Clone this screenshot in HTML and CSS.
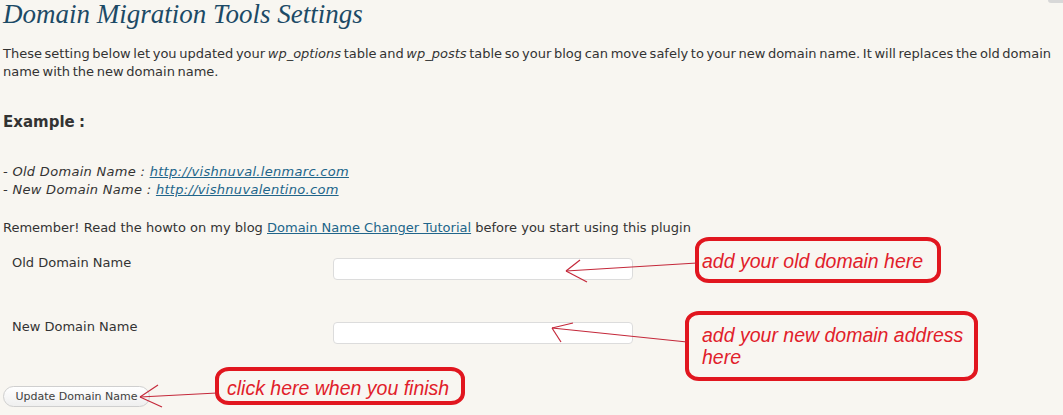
FILE: index.html
```html
<!DOCTYPE html>
<html>
<head>
<meta charset="utf-8">
<link rel="stylesheet" href="styles.css">
</head>
<body>
<div class="tab-corner"></div>
<div class="wrap">
  <h2 class="title">Domain Migration Tools Settings</h2>
  <p class="intro">These setting below let you updated your <em>wp_options</em> table and <em>wp_posts</em> table so your blog can move safely to your new domain name. It will replaces the old domain<br>name with the new domain name.</p>
  <h3 class="example">Example :</h3>
  <p class="samples"><em>- Old Domain Name : <a href="#">http://vishnuval.lenmarc.com</a></em><br><em>- New Domain Name : <a href="#">http://vishnuvalentino.com</a></em></p>
  <p class="remember">Remember! Read the howto on my blog <a href="#">Domain Name Changer Tutorial</a> before you start using this plugin</p>
  <form class="form">
    <div class="row">
      <label class="label">Old Domain Name</label>
      <input class="field" type="text">
    </div>
    <div class="row">
      <label class="label">New Domain Name</label>
      <input class="field" type="text">
    </div>
    <div class="submit">
      <button class="button" type="button">Update Domain Name</button>
    </div>
  </form>
</div>

<div class="note note-old">add your old domain here</div>
<div class="note note-new">add your new domain address here</div>
<div class="note note-click">click here when you finish</div>

<svg class="arrows" width="1063" height="415" viewBox="0 0 1063 415">
  <g stroke="#c4283a" stroke-width="1.2" fill="none">
    <line x1="697" y1="263" x2="566" y2="271"/>
    <line x1="566" y1="271" x2="580" y2="260"/>
    <line x1="566" y1="271" x2="587" y2="282"/>
    <line x1="687" y1="342" x2="552" y2="328"/>
    <line x1="552" y1="328" x2="573" y2="323"/>
    <line x1="552" y1="328" x2="561" y2="342"/>
    <line x1="217" y1="393" x2="140" y2="397"/>
    <line x1="140" y1="397" x2="158" y2="385"/>
    <line x1="140" y1="397" x2="162" y2="407"/>
  </g>
</svg>
</body>
</html>
```

FILE: styles.css
```css
html, body {
  margin: 0;
  padding: 0;
  background: #f8f6f1;
}
body {
  font-family: "DejaVu Sans", Verdana, sans-serif;
  font-size: 13px;
  color: #333;
  width: 1063px;
  height: 415px;
  overflow: hidden;
  position: relative;
}
.tab-corner {
  position: absolute;
  right: 0;
  top: 0;
  width: 15px;
  height: 3px;
  background: #d8d8d8;
  border-bottom-left-radius: 3px;
}
.wrap {
  padding: 0 3px;
}
.title {
  margin: 0;
  font-family: "Liberation Serif", "Times New Roman", serif;
  font-style: italic;
  font-weight: normal;
  font-size: 27px;
  line-height: 28px;
  color: #1c4a66;
  height: 45px;
}
.intro {
  margin: 0;
  line-height: 18px;
  word-spacing: -1.5px;
}
.example {
  margin: 31px 0 0;
  font-size: 15px;
  line-height: 20px;
  font-weight: bold;
  word-spacing: -1px;
  color: #333;
}
.samples {
  margin: 31px 0 0;
  line-height: 18px;
  letter-spacing: 0.3px;
}
a {
  color: #21658a;
  text-decoration: underline;
}
.remember {
  margin: 20px 0 0;
  line-height: 18px;
}
.form {
  margin-top: 17px;
}
.row {
  display: flex;
  align-items: flex-start;
  height: 64px;
}
.label {
  width: 321px;
  padding-left: 9px;
  box-sizing: border-box;
  line-height: 18px;
  color: #333;
}
.field {
  margin: 4px 0 0 9px;
  width: 300px;
  height: 22px;
  box-sizing: border-box;
  border: 1px solid #dcdcdc;
  border-radius: 4px;
  background: #fff;
  padding: 0 4px;
}
.submit {
  padding-top: 4px;
}
.button {
  font-family: "DejaVu Sans", Verdana, sans-serif;
  font-size: 11px;
  color: #404040;
  width: 147px;
  height: 21px;
  padding: 0;
  border: 1px solid #cfcfcf;
  border-radius: 11px;
  background: linear-gradient(#ffffff, #efefef);
}
.note {
  position: absolute;
  box-sizing: border-box;
  border: 4px solid #e1161f;
  border-radius: 14px / 12px;
  font-family: "Liberation Sans", Arial, sans-serif;
  font-style: italic;
  font-size: 19.5px;
  color: #e1202a;
  line-height: 22px;
  white-space: nowrap;
}
.note-old {
  left: 695px;
  top: 237px;
  width: 246px;
  height: 46px;
  padding: 9px 0 0 3px;
}
.note-new {
  left: 685px;
  top: 311px;
  width: 293px;
  height: 70px;
  padding: 9px 0 0 13px;
  white-space: normal;
}
.note-click {
  left: 215px;
  top: 367px;
  width: 250px;
  height: 38px;
  padding: 6px 0 0 8px;
}
.arrows {
  position: absolute;
  left: 0;
  top: 0;
  pointer-events: none;
}
```
